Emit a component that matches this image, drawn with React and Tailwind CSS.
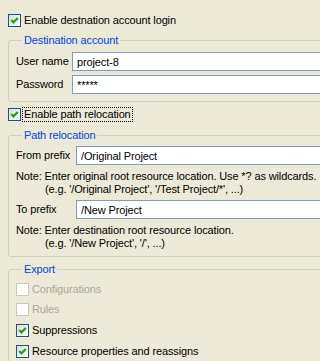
import { useState } from "react";

function CheckBox({ checked, disabled }) {
  return (
    <span
      className={
        "flex h-[13px] w-[13px] shrink-0 items-center justify-center border " +
        (disabled
          ? "border-[#CAC8BB] bg-white"
          : "border-[#1C5180] bg-gradient-to-br from-[#DCDCD7] to-white")
      }
    >
      {checked && (
        <svg width="11" height="11" viewBox="0 0 11 11">
          <polyline
            points="2.2,5 4.5,7.3 8.8,3"
            fill="none"
            stroke="#21A121"
            strokeWidth="2.3"
          />
        </svg>
      )}
    </span>
  );
}

function CheckRow({ label, checked, disabled, focused }) {
  return (
    <div className="flex h-[15px] items-center">
      <CheckBox checked={checked} disabled={disabled} />
      <span
        className={
          "ml-px border border-dotted px-px leading-[13px] " +
          (focused ? "border-black" : "border-transparent") +
          (disabled ? " text-[#ACA899]" : " text-black")
        }
      >
        {label}
      </span>
    </div>
  );
}

function Field({ label, value, labelWidth }) {
  return (
    <div className="flex items-center">
      <span className={"shrink-0 " + labelWidth}>{label}</span>
      <input
        readOnly
        value={value}
        className="h-[19px] flex-1 border border-[#7F9DB9] bg-white px-[4px] text-[11px] leading-[17px] tracking-[-0.13px] text-black outline-none"
      />
    </div>
  );
}

function Group({ title, className, children }) {
  return (
    <fieldset className={"rounded-[3px] border border-[#D0D0BF] pl-[7px] " + className}>
      <legend className="ml-[6px] px-[2px] leading-[13px] text-[#0046D5]">{title}</legend>
      {children}
    </fieldset>
  );
}

export default function App() {
  const [user] = useState("project-8");

  return (
    <div className="h-[361px] w-[320px] overflow-hidden bg-[#ECE9D8] font-['Liberation_Sans',Arial,sans-serif] text-[11px] tracking-[-0.13px] text-black">
      <div className="flex w-[340px] flex-col pl-2 pt-[13px]">
        <CheckRow label="Enable destnation account login" checked />

        <Group title="Destination account" className="mt-[6px] pb-[7px]">
          <div className="flex flex-col gap-[4px] pt-[5px]">
            <Field label="User name" value={user} labelWidth="w-[56px]" />
            <Field label="Password" value="*****" labelWidth="w-[56px]" />
          </div>
        </Group>

        <div className="mt-[5px]">
          <CheckRow label="Enable path relocation" checked focused />
        </div>

        <Group title="Path relocation" className="mt-[7px] pb-[6px]">
          <div className="flex flex-col pt-[4px]">
            <Field label="From prefix" value="/Original Project" labelWidth="w-[60px]" />
            <div className="mt-[5px] leading-[13px]">
              <div>Note: Enter original root resource location. Use *? as wildcards.</div>
              <div className="pl-[29px]">(e.g. '/Original Project', '/Test Project/*', ...)</div>
            </div>
            <div className="mt-[4px]">
              <Field label="To prefix" value="/New Project" labelWidth="w-[60px]" />
            </div>
            <div className="mt-[5px] leading-[13px]">
              <div>Note: Enter destination root resource location.</div>
              <div className="pl-[29px]">(e.g. '/New Project', '/', ...)</div>
            </div>
          </div>
        </Group>

        <Group title="Export" className="mt-[6px] pb-[10px]">
          <div className="flex flex-col pt-[6px]">
            <CheckRow label="Configurations" disabled />
            <div className="mt-[5px]">
              <CheckRow label="Rules" disabled />
            </div>
            <div className="mt-[6px]">
              <CheckRow label="Suppressions" checked />
            </div>
            <div className="mt-[6px]">
              <CheckRow label="Resource properties and reassigns" checked />
            </div>
          </div>
        </Group>
      </div>
    </div>
  );
}
